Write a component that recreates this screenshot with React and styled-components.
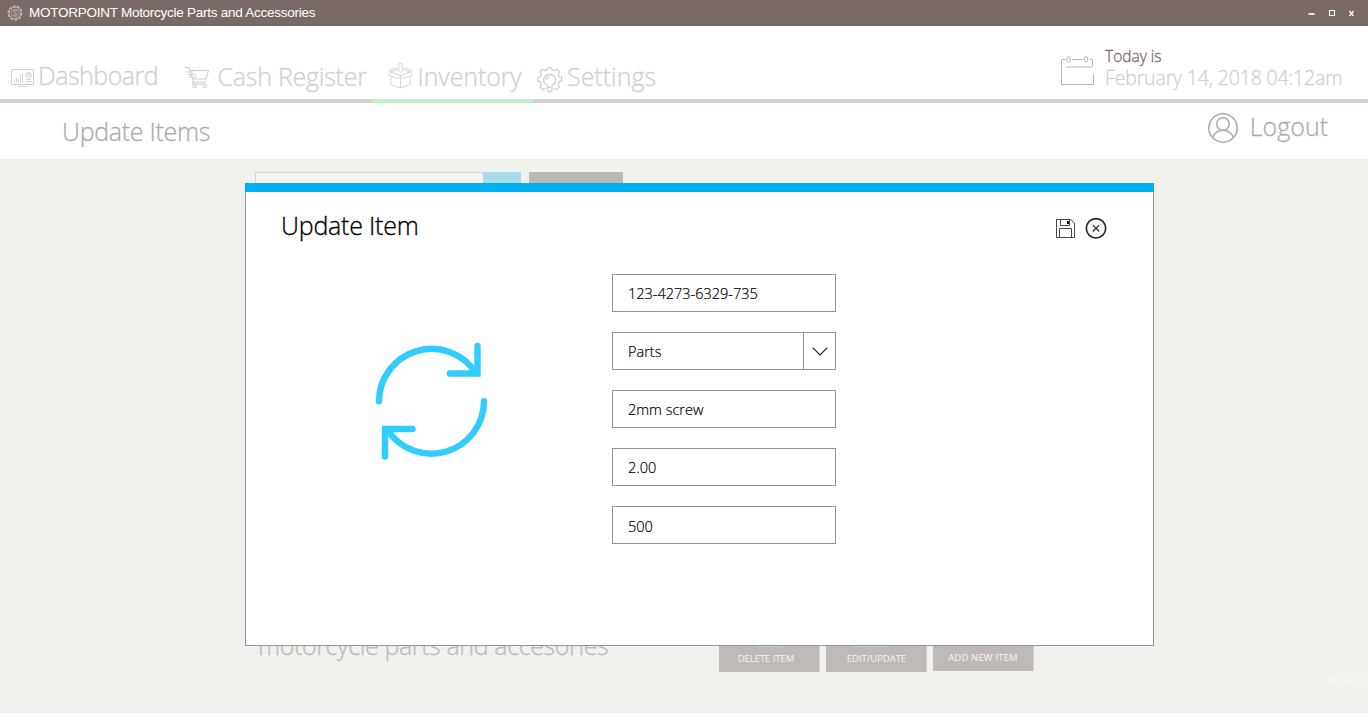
import React from 'react';
import styled, { createGlobalStyle } from 'styled-components';

const GlobalStyle = createGlobalStyle`
  * { box-sizing: border-box; }
  body { margin: 0; background: #fff; overflow: hidden; }
  svg { display: block; flex: none; fill: none; }
`;

const Page = styled.div`
  position: relative;
  width: 1368px;
  height: 720px;
  display: flex;
  flex-direction: column;
  overflow: hidden;
  font-family: "Open Sans", "Segoe UI", sans-serif;
  font-weight: 300;
  -webkit-text-stroke: 0.3px currentColor;
  white-space: nowrap;
`;

const TitleBar = styled.header`
  height: 26px;
  flex: none;
  display: flex;
  align-items: center;
  padding: 0 12px 0 7px;
  background: #796967;
  color: #fff;
  -webkit-text-stroke: 0;
`;

const AppName = styled.h1`
  flex: 1;
  margin: 0 0 0 6px;
  font: 400 13.5px/26px "Liberation Sans", Arial, sans-serif;
  letter-spacing: -0.26px;
`;

const WindowControls = styled.div`
  display: flex;
  align-items: center;
  gap: 12px;
`;

const TopNav = styled.nav`
  height: 77px;
  flex: none;
  display: grid;
  grid-template-columns: 172px 200px 161px 1fr 307px;
  border-bottom: 4px solid #d4d0d0;
`;

const NavItem = styled.a`
  display: flex;
  align-items: flex-start;
  height: 77px;
  padding-left: ${(p) => p.$inset}px;
  border-bottom: 4px solid ${(p) => (p.$active ? '#bdf2c8' : 'transparent')};
`;

const NavIcon = styled.span`
  margin-top: ${(p) => p.$top}px;
`;

const NavLabel = styled.span`
  margin: ${(p) => p.$top}px 0 0 ${(p) => p.$gap}px;
  font-size: 25px;
  line-height: 30px;
  letter-spacing: ${(p) => p.$spacing}px;
  color: #d4cfcf;
`;

const DateBox = styled.div`
  display: flex;
  align-items: flex-start;
  gap: 10px;
`;

const CalendarIcon = styled.span`
  margin-top: 29px;
`;

const DateText = styled.div`
  padding-top: 20px;
`;

const Today = styled.div`
  font-size: 15.5px;
  line-height: 20px;
  color: #796967;
  -webkit-text-stroke-width: 0.3px;
`;

const Timestamp = styled.div`
  margin-top: 1px;
  font-size: 19.5px;
  line-height: 22px;
  letter-spacing: -0.15px;
  color: #d4cfcf;
`;

const SubHeader = styled.div`
  height: 56px;
  flex: none;
  display: flex;
  justify-content: space-between;
  align-items: flex-start;
  padding: 0 40px 0 62px;
  color: #acacac;
  font-size: 25px;
  line-height: 30px;
`;

const SectionTitle = styled.h2`
  margin: 13px 0 0;
  font-size: inherit;
  font-weight: inherit;
  letter-spacing: -0.3px;
`;

const Logout = styled.a`
  display: flex;
  gap: 12px;
  padding-top: 8px;
  svg { margin-top: 2px; }
`;

const Main = styled.main`
  height: 554px;
  flex: none;
  display: flex;
  flex-direction: column;
  justify-content: space-between;
  padding: 13px 0 28px 255px;
  background: #f1f2ed;
`;

const SearchRow = styled.div`
  display: flex;
  height: 30px;
`;

const SearchInput = styled.div`
  width: 228px;
  background: #f5f5f3;
  border: 1px solid #d5d7d2;
  border-right: 0;
`;

const SearchButton = styled.div`
  width: 38px;
  margin-right: 8px;
  background: #a8ddf0;
`;

const FilterButton = styled.div`
  width: 94px;
  background: #b6bab3;
`;

const FooterRow = styled.div`
  display: flex;
  align-items: flex-end;
`;

const Caption = styled.div`
  width: 461px;
  flex: none;
  margin: 0 0 25px 3px;
  font-size: 25px;
  line-height: 30px;
  letter-spacing: -0.38px;
  color: #b9bfb7;
`;

const Actions = styled.div`
  display: flex;
  align-items: flex-start;
  gap: 6px;
  width: 649px;
  height: 60px;
  margin-bottom: 13px;
`;

const ActionButton = styled.div`
  width: 101px;
  height: ${(p) => p.$height}px;
  flex: none;
  display: flex;
  flex-direction: column;
  align-items: center;
  justify-content: flex-end;
  padding: 0 6px 7px ${(p) => p.$shift || 0}px;
  border-right: 1px solid #d5d2ce;
  background: #bfbab7;
  color: #f7f6f5;
  font-size: 9.5px;
  font-weight: 400;
  line-height: 12px;
  letter-spacing: ${(p) => p.$spacing}px;
  -webkit-text-stroke: 0;
`;

const ActionMark = styled.span`
  width: ${(p) => p.$width}px;
  height: 10px;
  margin: 0 ${(p) => p.$right || 0}px 6px ${(p) => p.$left || 0}px;
  border-radius: 2px;
  background: #a6dbe5;
`;

const CartHint = styled.div`
  width: 42px;
  flex: none;
  margin: 61px 0 0 auto;
  font-size: 9.5px;
  font-weight: 600;
  line-height: 14px;
  letter-spacing: -0.1px;
  color: #f7f8f4;
  -webkit-text-stroke: 0;
`;

const Dialog = styled.section`
  position: absolute;
  left: 245px;
  top: 183px;
  width: 909px;
  height: 463px;
  display: flex;
  flex-direction: column;
  background: #fff;
  border: 1px solid #929597;
  border-top: 0;
  color: #000;
  &::before {
    content: "";
    height: 9px;
    margin: 0 -1px;
    flex: none;
    background: #00b0f3;
  }
`;

const DialogHeader = styled.div`
  height: 82px;
  display: flex;
  justify-content: space-between;
  padding: 18px 46px 0 35px;
`;

const DialogTitle = styled.h2`
  margin: 0;
  font-size: 25px;
  line-height: 30px;
  font-weight: 300;
  letter-spacing: -0.22px;
`;

const DialogTools = styled.div`
  display: flex;
  gap: 10px;
  padding-top: 7px;
`;

const SaveButton = styled.span`
  margin-top: 2px;
`;

const DialogBody = styled.div`
  display: flex;
  align-items: flex-start;
`;

const RefreshArt = styled.div`
  width: 366px;
  padding: 67px 0 0 129px;
`;

const Form = styled.div`
  display: flex;
  flex-direction: column;
  gap: 20px;
`;

const Field = styled.div`
  width: 224px;
  height: 38px;
  display: flex;
  justify-content: space-between;
  padding-left: 15px;
  padding-top: ${(p) => p.$drop || 0}px;
  border: 1px solid #929597;
  font-size: 14.5px;
  line-height: 37px;
  -webkit-text-stroke-width: 0.2px;
`;

const SelectArrow = styled.span`
  width: 32px;
  display: flex;
  align-items: center;
  justify-content: center;
  border-left: 1px solid #929597;
`;

const GearLogo = () => (
  <svg width="16" height="16" viewBox="0 0 16 16" stroke="#cfc6c5" strokeWidth="0.8">
    <circle cx="8" cy="8" r="6.9" strokeWidth="1.2" strokeDasharray="2.6 1.7" />
    <circle cx="8" cy="8" r="5.8" />
    <circle cx="8" cy="8" r="3.8" strokeWidth="0.6" />
    <path d="M10 6.2C9 5 6.2 5.4 6.4 7c.2 1.3 3.2.6 3.2 2.2 0 1.5-2.7 1.6-3.7.4" />
  </svg>
);

const DashboardIcon = () => (
  <svg width="24" height="20" viewBox="0 0 24 20" stroke="#d4cfcf">
    <path d="M.5.5h22v15H.5zM7 17.5h9" />
    <path d="M3.5 13.5V10M5.5 13.5V8.5M7.5 13.5V9.5M9.5 13.5V6M11.5 13.5V4.5M15 10.5h5M15 12.5h5" />
    <circle cx="17.5" cy="6" r="2.5" />
    <path d="M17.5 3.5V6H20" />
  </svg>
);

const CartIcon = () => (
  <svg width="26" height="23" viewBox="0 0 26 23" stroke="#d4cfcf" strokeWidth="1.1">
    <path d="M.5 1.5h4.500L9.500 16h13M6.300 4.500h18.200L22 13H8.800M1.500 6h8M3.500 8.500h8M5 11h8M9.500 16c-1.500 1-1 2 0 2h12" />
    <circle cx="10.5" cy="20" r="1.8" />
    <circle cx="20.5" cy="20" r="1.8" />
  </svg>
);

const BoxIcon = () => (
  <svg width="26" height="26" viewBox="0 0 26 26" stroke="#d4cfcf" strokeWidth="0.9" strokeLinejoin="round">
    <path d="M10.800.7h3.400v5.500h2L12.500 9.500 8.800 6.200h2z" />
    <path d="M2.800 13.500v8l9.700 3.500 9.700-3.500v-8M12.500 12.500V25" />
    <path d="M12.500 12.500 3 9 .5 12.200l9.300 3.300 2.700-3 2.700 3 9.300-3.300L22 9z" />
    <path d="M3 9 .8 7.200 8.500 5M22 9l2.200-1.800L16.500 5M3 9l6-2.200M22 9l-6-2.200" />
  </svg>
);

const SettingsIcon = () => (
  <svg width="26" height="26" viewBox="0 0 26 26" stroke="#d4cfcf" strokeWidth="1.3" strokeLinejoin="round">
    <path d="M8.500 21.500 6 22.700 3 19.700 4.300 17 3.300 14.700.7 14v-3.500l2.600-.8 1-2.300L3 4.800 5.500 2.300 8.200 3.600 10.300 2.700 11.200.7h3l.9 2 2.100.9 2.700-1.300 2.500 2.500-1.300 2.600 1 2.300 2.600.8V14l-2.600.7-1 2.300 1.300 2.700-3 3-2.500-1.200" />
    <path d="M10.500 18.500C4 15 6.500 7.500 12.600 7.500S21.200 15 15 18.500v4.800l-1 1.200h-2.500l-1-1.200z" />
    <path d="M10.500 20.500h4M9 13a4 4 0 0 1 3-3.200" />
  </svg>
);

const Calendar = () => (
  <svg width="34" height="32" viewBox="0 0 34 32" stroke="#b9b4b3">
    <path d="M4.500 4.500H2A1.500 1.500 0 0 0 .5 6v23.500h32V19M11.500 4.500h10M28.500 4.500H31.500V10.500a1.500 1.500 0 0 1-1.500 1.500H4.500" />
    <rect x="6" y="1.5" width="3" height="5.5" rx="1.5" />
    <rect x="23.5" y="1.5" width="3" height="5.5" rx="1.5" />
  </svg>
);

const UserIcon = () => (
  <svg width="30" height="30" viewBox="0 0 30 30" stroke="#acacac" strokeWidth="1.6">
    <circle cx="15" cy="15" r="14.2" />
    <circle cx="15" cy="11" r="6.3" />
    <path d="M4.500 24.500C6.500 20 10 17.300 15 17.300s8.500 2.700 10.500 7.200" />
  </svg>
);

const SaveIcon = () => (
  <svg width="19" height="19" viewBox="0 0 19 19" stroke="#333">
    <path d="M.5.5h14L18.500 4v14.500H.5zM4.500.5v6h9v-6M3.500 18.500v-9h12v9" strokeWidth="0.9" />
    <path d="M12 2v3" strokeWidth="2" stroke="#111" />
  </svg>
);

const CloseIcon = () => (
  <svg width="22" height="22" viewBox="0 0 22 22" stroke="#2b2b2b">
    <circle cx="11" cy="11.3" r="9.7" strokeWidth="1.7" />
    <path d="m7.800 8.100 6.400 6.400M14.200 8.100l-6.400 6.400" strokeWidth="1.3" />
  </svg>
);

const RefreshIcon = () => (
  <svg width="114" height="120" viewBox="15 11 114 120" stroke="#33ccff" strokeWidth="6.4" strokeLinecap="round">
    <path d="M19 71.300A52.600 52.600 0 0 1 115.500 42.500M124 71.300A52.600 52.600 0 0 1 27.500 100" />
    <path d="M117.500 16V43.500H90M25 126.500V99H52.500" strokeLinejoin="miter" />
  </svg>
);

export default function App() {
  return (
    <>
      <GlobalStyle />
      <Page>
        <TitleBar>
          <GearLogo />
          <AppName>MOTORPOINT Motorcycle Parts and Accessories</AppName>
          <WindowControls>
            <svg width="8" height="8" viewBox="0 0 8 8" stroke="#fff"><path d="M.5 5h6" strokeWidth="1.6" /></svg>
            <svg width="8" height="8" viewBox="0 0 8 8" stroke="#fff"><path d="M1.500 1.500h5v5h-5z" strokeWidth="1.1" /></svg>
            <svg width="8" height="8" viewBox="0 0 8 8" stroke="#fff"><path d="m1.500 2 4 5M5.500 2l-4 5" strokeWidth="1.3" /></svg>
          </WindowControls>
        </TitleBar>

        <TopNav>
          <NavItem $inset={11}>
            <NavIcon $top={43}><DashboardIcon /></NavIcon>
            <NavLabel $top={34} $gap={3} $spacing={-0.5}>Dashboard</NavLabel>
          </NavItem>
          <NavItem $inset={12}>
            <NavIcon $top={40}><CartIcon /></NavIcon>
            <NavLabel $top={35} $gap={7.5} $spacing={-0.25}>Cash Register</NavLabel>
          </NavItem>
          <NavItem $inset={16} $active>
            <NavIcon $top={37}><BoxIcon /></NavIcon>
            <NavLabel $top={35} $gap={3.5} $spacing={-0.12}>Inventory</NavLabel>
          </NavItem>
          <NavItem $inset={4}>
            <NavIcon $top={41}><SettingsIcon /></NavIcon>
            <NavLabel $top={35} $gap={4} $spacing={0}>Settings</NavLabel>
          </NavItem>
          <DateBox>
            <CalendarIcon><Calendar /></CalendarIcon>
            <DateText>
              <Today>Today is</Today>
              <Timestamp>February 14, 2018 04:12am</Timestamp>
            </DateText>
          </DateBox>
        </TopNav>

        <SubHeader>
          <SectionTitle>Update Items</SectionTitle>
          <Logout>
            <UserIcon />
            <span>Logout</span>
          </Logout>
        </SubHeader>

        <Main>
          <SearchRow>
            <SearchInput />
            <SearchButton />
            <FilterButton />
          </SearchRow>
          <FooterRow>
            <Caption>motorcycle parts and accesories</Caption>
            <Actions>
              <ActionButton $height={60} $spacing={-0.05}>
                <ActionMark $width={26} $left={8} />
                DELETE ITEM
              </ActionButton>
              <ActionButton $height={60} $spacing={-0.03} $shift={7}>
                <ActionMark $width={38} $right={12} />
                EDIT/UPDATE
              </ActionButton>
              <ActionButton $height={59} $spacing={0.17} $shift={6}>ADD NEW ITEM</ActionButton>
              <CartHint>ADD TO C</CartHint>
            </Actions>
          </FooterRow>
        </Main>

        <Dialog>
          <DialogHeader>
            <DialogTitle>Update Item</DialogTitle>
            <DialogTools>
              <SaveButton><SaveIcon /></SaveButton>
              <CloseIcon />
            </DialogTools>
          </DialogHeader>
          <DialogBody>
            <RefreshArt><RefreshIcon /></RefreshArt>
            <Form>
              <Field>123-4273-6329-735</Field>
              <Field>
                Parts
                <SelectArrow>
                  <svg width="16" height="9" viewBox="0 0 16 9" stroke="#222" strokeWidth="1.2"><path d="m.7.7 7.300 7.300L15.300.7" /></svg>
                </SelectArrow>
              </Field>
              <Field>2mm screw</Field>
              <Field>2.00</Field>
              <Field $drop={1}>500</Field>
            </Form>
          </DialogBody>
        </Dialog>
      </Page>
    </>
  );
}
